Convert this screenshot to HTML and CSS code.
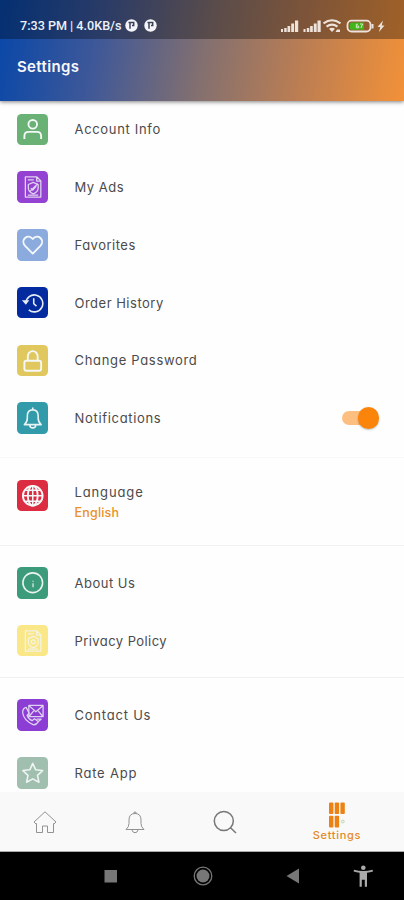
FILE: index.html
```
<!DOCTYPE html>
<html lang="en">
<head>
<meta charset="utf-8">
<title>Settings</title>
<link rel="stylesheet" href="styles.css">
</head>
<body>
<div class="screen">
  <header class="top">
    <div class="status">
      <span class="time">7:33 PM | 4.0KB/s</span>
      <svg class="pbadge" viewBox="0 0 13 13"><circle cx="6.500" cy="6.500" r="6.200" fill="#f4f4fa"/><path d="M5 3.200v6.500M3.500 3.600h5.200v3H7" fill="none" stroke="#3b4058" stroke-width="1.500"/></svg>
      <svg class="pbadge second" viewBox="0 0 13 13"><circle cx="6.500" cy="6.500" r="6.200" fill="#f4f4fa"/><path d="M5 3.200v6.500M3.500 3.600h5.200v3H7" fill="none" stroke="#3b4058" stroke-width="1.500"/></svg>
      <svg class="signals" viewBox="0 0 106 16">
        <g fill="#eee3da">
          <path d="M1 11h2v3H1zM4.200 10h2.500v4H4.200zM7.500 8h2.700v6H7.500zM11.200 5.500h2.900V14h-2.900zM15 2.500h3.200V14H15z"/>
          <path d="M23.500 11h2v3h-2zM26.800 10h2.500v4h-2.500zM30.100 8h2.700v6h-2.700zM33.800 5.500h2.900V14h-2.900zM37.500 2.500h3.200V14h-3.200z"/>
          <path d="M52 14l-3-3.200q3-2.200 6 0zM57 11.500h3V14h-4.500z"/>
          <path d="M103 2.500l-5.500 6.500h2.800l-1.300 5 5.500-6.500h-2.800z"/>
        </g>
        <g fill="none" stroke="#eee3da" stroke-width="2.100">
          <path d="M43.500 5.300q8.500-6 17 0M46.500 8.600q5.500-4 11 0"/>
          <rect x="67.500" y="2.700" width="23" height="10.800" rx="4" stroke-width="1.800"/>
          <path d="M92.500 6v4.500" stroke-width="2"/>
        </g>
        <path d="M71.500 4.500H84v7.200H71.500q-1.500 0-1.500-1.500V6q0-1.500 1.500-1.500z" fill="#43b51c"/>
        <path d="M76.500 6.200h1.500M76.300 6.200v3.600h2.400V8h-2.400M80 6h2.500L81 10" fill="none" stroke="#e0efcf" stroke-width=".9"/>
      </svg>
    </div>
    <h1 class="title">Settings</h1>
  </header>

  <main class="list">
    <section class="group first">
      <div class="row"><span class="tile green"><svg viewBox="0 0 32 32"><circle cx="16" cy="10.500" r="4.400"/><path d="M7.500 25.500v-3q0-4.300 4.300-4.300h8.400q4.300 0 4.300 4.300v3"/></svg></span><span class="label account">Account Info</span></div>
      <div class="row"><span class="tile purple"><svg class="thin" viewBox="0 0 32 32"><path d="M8.500 6h11.700l4 4v16.500H8.500zM20 6v4.200h4.200M11 9h6M11 24.500h10.500"/><path d="M16.500 11.500l5 2.200v3.500q0 4-5 6-5-2-5-6v-3.500z"/><path d="M14 17.500l2 2 3.500-4M13 21l8-8"/></svg></span><span class="label">My Ads</span></div>
      <div class="row"><span class="tile sky"><svg viewBox="0 0 32 32"><path d="M16 25L8 16.800c-4.800-5.600 2.700-12.500 8-6.700 5.300-5.800 12.800 1.100 8 6.700z"/></svg></span><span class="label">Favorites</span></div>
      <div class="row"><span class="tile navy"><svg class="medium" viewBox="0 0 32 32"><path d="M9 16.500A8.600 8.600 0 1 1 12 23.200M17 11.500v5.500l2.800 2.500"/><path class="solid" d="M5 13.500h7.500L9 18z"/></svg></span><span class="label">Order History</span></div>
      <div class="row"><span class="tile gold"><svg viewBox="0 0 32 32"><rect x="7.500" y="16" width="17" height="10.200" rx="2"/><path d="M11 16v-4.500a5 5.300 0 0 1 10 0V16"/></svg></span><span class="label change">Change Password</span></div>
      <div class="row"><span class="tile teal"><svg class="medium" viewBox="0 0 32 32"><path d="M7.500 23q3-2.500 3-6.700v-2q0-6.300 5.500-6.300t5.500 6.300v2q0 4.200 3 6.700zM16 5.500V8M13 23.300q0 3 3 3t3-3"/></svg></span><span class="label notif">Notifications</span><span class="switch"><span class="track"></span><span class="knob"></span></span></div>
    </section>
    <section class="group language">
      <div class="row tall"><span class="tile red"><svg viewBox="0 0 32 32"><circle cx="16" cy="16" r="10"/><ellipse cx="16" cy="16" rx="5" ry="10"/><path d="M6 16h20M16 6v20M8.500 10.500h15M8.500 21.500h15" stroke-width="1.500"/></svg></span><span class="lines"><span class="label lang">Language</span><span class="value">English</span></span></div>
    </section>
    <section class="group about">
      <div class="row"><span class="tile emerald"><svg class="medium" viewBox="0 0 32 32"><circle cx="16" cy="16" r="10"/><path d="M16.300 16.500v4M16.300 14v1" stroke-width="1.200"/></svg></span><span class="label">About Us</span></div>
      <div class="row"><span class="tile lemon"><svg class="thin" viewBox="0 0 32 32"><path d="M8.500 6h11.700l4 4v16.500H8.500zM20 6v4.200h4.200M11 9h6M11 24.500h10.500"/><path d="M16.500 11.500l5 2.200v3.500q0 4-5 6-5-2-5-6v-3.500z"/><circle cx="16.500" cy="17" r="2"/></svg></span><span class="label privacy">Privacy Policy</span></div>
    </section>
    <section class="group contact">
      <div class="row"><span class="tile violet"><svg class="thin" viewBox="0 0 32 32"><path d="M12 6.500h14.500V18H12zM12 6.500l7.200 6.500 7.300-6.500M12 18l5-6M26.500 18l-5-6"/><path d="M9.300 8.500q-3.800 1-3.500 5.500.8 7.500 10.500 12 3 .8 5.500-3l-4-3-2.500 2q-4-2-5-5.500l2-2zM20 20.500h4.500l-2.500 2"/></svg></span><span class="label contactus">Contact Us</span></div>
      <div class="row"><span class="tile sage"><svg class="medium" viewBox="0 0 32 32"><path d="M16 6.500l3 6.500 7 .8-5.200 4.800 1.500 7L16 22.200l-6.300 3.400 1.500-7L6 13.800l7-.8z"/></svg></span><span class="label rate">Rate App</span></div>
    </section>
  </main>

  <nav class="tabs">
    <span class="tab"><svg class="tabicon" viewBox="0 0 24 24"><path d="M1 12L12 1.800 23 12l-2 2-.5-.4V22.500h-6V16h-5v6.500h-6v-8.900L3 14z"/></svg></span>
    <span class="tab"><svg class="tabicon" viewBox="0 0 24 24"><path d="M3 19.500q3-2.500 3-6V10q0-6.500 6-6.500t6 6.500v3.500q0 3.500 3 6zM11 3.700V2.200h2v1.500M9 20q.5 2.700 3 2.700t3-2.700"/></svg></span>
    <span class="tab"><svg class="tabicon search" viewBox="0 0 24 24"><circle cx="10.800" cy="11" r="9.500"/><path d="M17.500 17.700l5.500 5.300"/></svg></span>
    <span class="tab active"><svg class="bars" viewBox="0 0 18 26"><g fill="#ed8214"><rect x="1" y=".5" width="4.400" height="11.500" rx="1"/><rect x="6.700" y=".5" width="4.400" height="11.500" rx="1"/><rect x="12.400" y=".5" width="4.400" height="11.500" rx="1"/><rect x="1" y="13.800" width="4.400" height="11.700" rx="1"/><rect x="6.700" y="13.800" width="4.400" height="11.700" rx="1"/></g><circle cx="14.800" cy="19.500" r="1.400" fill="none" stroke="#b9d6aa"/></svg><span class="tablabel">Settings</span></span>
  </nav>
  <footer class="system">
    <svg viewBox="0 0 404 48">
      <rect x="104.500" y="18" width="12.500" height="12.500" fill="#777"/>
      <circle cx="203" cy="24" r="8.800" fill="none" stroke="#777" stroke-width="1.300"/><circle cx="203" cy="24" r="6.500" fill="#777"/>
      <path d="M286.500 24l12.500-7.500v15z" fill="#777"/>
      <g fill="#aaa"><circle cx="363.300" cy="15.800" r="2.300"/><path d="M354 17.800q9.300 2.600 18.600 0l.4 1.700q-3 .8-6 1.200v14h-2.200v-7h-3v7h-2.200v-14q-3-.4-6-1.200z"/></g>
    </svg>
  </footer>
</div>
</body>
</html>
```
FILE: styles.css
```
* { box-sizing: border-box; }
body { margin: 0; font-family: Inter, "Liberation Sans", sans-serif; font-feature-settings: "cv11"; }
.screen { width: 404px; height: 900px; display: flex; flex-direction: column; overflow: hidden; background: #fefefe; }
.top { flex: none; height: 100.500px; background: linear-gradient(100deg, #0747a9 0%, #3f5898 25%, #84706f 51%, #bd7e52 75%, #f29138 100%); box-shadow: 0 1px 4px rgba(0,0,0,.5); z-index: 1; }
.status { height: 39px; padding: 12px 18px 0 20px; display: flex; align-items: center; background: rgba(0,0,0,.32); }
.time { width: 103px; font: 500 12.600px Roboto, sans-serif; color: #eef1f8; white-space: nowrap; }
.pbadge { width: 13px; height: 13px; margin-left: 2px; }
.pbadge.second { margin-left: 5.500px; }
.signals { width: 106px; height: 16px; margin-left: auto; flex: none; }
.title { margin: 0; padding: 17px 17px 0; font-size: 15px; line-height: 21px; font-weight: 600; letter-spacing: .35px; color: #f6f8fc; }
.list { flex: none; height: 691.500px; overflow: hidden; }
.group { border-bottom: 1px solid #f1f1f1; }
.first { height: 357px; border-color: #f8f8f8; }
.language { height: 88px; padding-top: 9px; }
.about { height: 132.500px; padding-top: 8.500px; }
.contact { padding-top: 8.200px; border: 0; }
.row { height: 57.750px; padding: 0 25px 0 16.500px; display: flex; align-items: center; }
.tile { width: 31.500px; height: 31.500px; margin-right: 26.500px; flex: none; border-radius: 4.500px; }
.tile svg { width: 100%; height: 100%; display: block; fill: none; stroke: #f4f8f8; stroke-width: 1.900; stroke-linejoin: round; }
.tile svg.thin { stroke-width: 1.300; opacity: .8; }
.tile svg.medium { stroke-width: 1.600; opacity: .95; }
.tile .solid { fill: #f4f8f8; stroke: none; }
.green { background: #69b174; }
.purple { background: #9442d2; }
.sky { background: #8babde; }
.navy { background: #032b9f; }
.gold { background: #e1c85e; }
.teal { background: #329baa; }
.red { background: #dc2c42; }
.emerald { background: #3c9b7b; }
.lemon { background: #fae787; }
.violet { background: #8c3dd4; }
.sage { background: #a0bfae; }
.label { font-size: 13px; line-height: 18px; letter-spacing: .5px; color: #4b4b4b; white-space: nowrap; }
.account, .change, .notif { letter-spacing: .68px; }
.lang { letter-spacing: .87px; }
.contactus, .rate { letter-spacing: .78px; }
.privacy { letter-spacing: .43px; }
.lines { display: flex; flex-direction: column; padding-top: 15px; }
.value { margin-top: 3px; font-size: 12.500px; line-height: 18px; font-weight: 500; letter-spacing: .2px; color: #e8912a; }
.switch { width: 37px; height: 22px; margin-left: auto; display: flex; align-items: center; }
.track { flex: none; width: 30px; height: 14.500px; margin-right: -14.500px; border-radius: 8px; background: #fdbf80; }
.knob { flex: none; width: 21.500px; height: 21.500px; border-radius: 50%; background: #fb850b; box-shadow: 0 1px 2px rgba(0,0,0,.25); }
.tabs { flex: none; height: 60px; padding: 0 11px 0 0; display: grid; grid-template-columns: 90px 90px 90px 134px; background: #f9f9f9; border-bottom: 1px solid #aaa; }
.tab { display: flex; flex-direction: column; align-items: center; justify-content: center; }
.tabicon { width: 24px; height: 24px; margin-top: 1px; fill: none; stroke: #929292; stroke-width: 1; }
.tabicon.search { stroke: #777; stroke-width: 1.500; }
.active { justify-content: flex-start; padding-top: 10px; }
.bars { width: 18px; height: 26px; flex: none; }
.tablabel { font-size: 11px; line-height: 14px; font-weight: 500; letter-spacing: .7px; color: #e58a28; }
.system { flex: none; height: 48px; background: #000; }
.system svg { width: 404px; height: 48px; display: block; }
```
